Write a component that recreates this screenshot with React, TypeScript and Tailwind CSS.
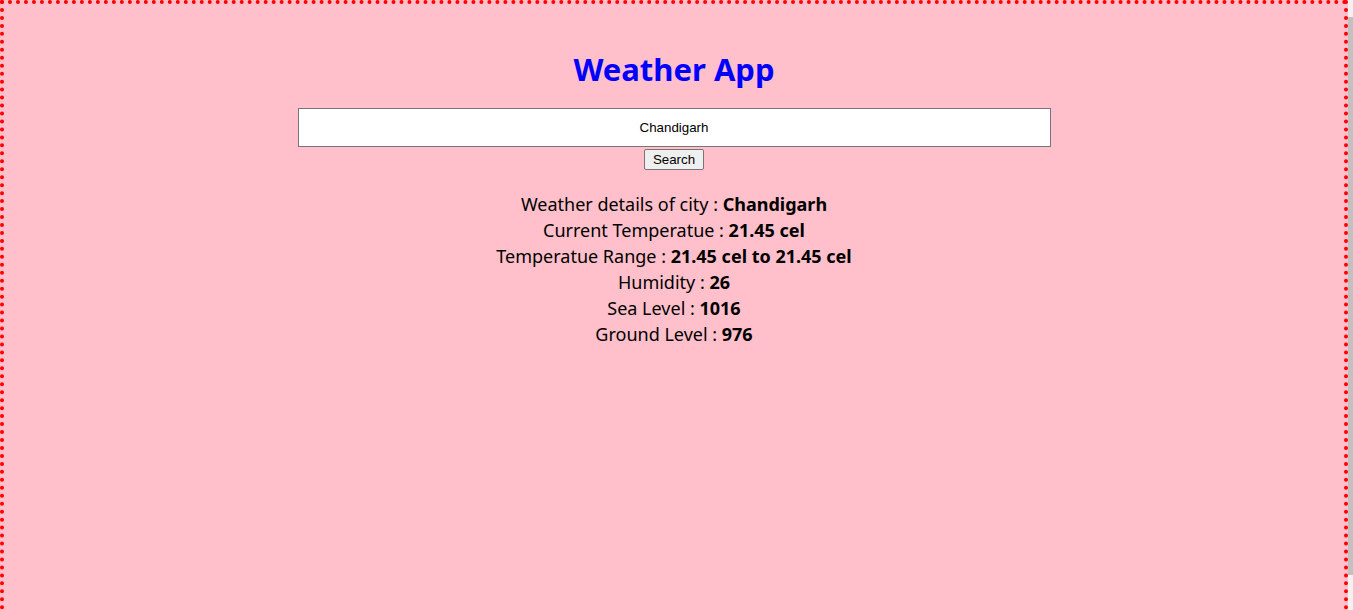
import React, { useState } from "react";

const details = (city: string) => [
	{ label: "Weather details of city", value: city },
	{ label: "Current Temperatue", value: "21.45 cel" },
	{ label: "Temperatue Range", value: "21.45 cel to 21.45 cel" },
	{ label: "Humidity", value: "26" },
	{ label: "Sea Level", value: "1016" },
	{ label: "Ground Level", value: "976" },
];

export default function App() {
	const [city, setCity] = useState("Chandigarh");

	return (
		<div className="flex h-[610px] overflow-hidden bg-[#f1f1f1]">
			<div className="flex-1 border-4 border-b-0 border-dotted border-[#ff0000] bg-[#ffc0cb] pt-[43px] text-center font-['Noto_Sans',sans-serif]">
				<h1 className="text-[31px] font-bold leading-[44px] text-[#0000ff]">
					Weather App
				</h1>
				<div className="mt-[17px] flex flex-col items-center">
					<input
						value={city}
						onChange={(e) => setCity(e.target.value)}
						className="h-[39px] w-[753px] border border-[#767676] bg-white text-center font-['Liberation_Sans',Arial,sans-serif] text-[13.33px] text-black outline-none"
					/>
					<button className="mt-[2px] h-[21px] rounded-[2px] border border-[#767676] bg-[#efefef] px-[8px] font-['Liberation_Sans',Arial,sans-serif] text-[13.33px] leading-[19px] text-black">
						Search
					</button>
				</div>
				<div className="mt-[21px] text-[18px] leading-[26px] text-black">
					{details(city).map((row) => (
						<div key={row.label}>
							{row.label} : <b className="font-bold">{row.value}</b>
						</div>
					))}
				</div>
			</div>
			<div className="flex w-[5px] flex-col bg-[#f1f1f1] pt-[17px]">
				<div className="h-[558px] bg-[#c1c1c1]" />
			</div>
		</div>
	);
}
